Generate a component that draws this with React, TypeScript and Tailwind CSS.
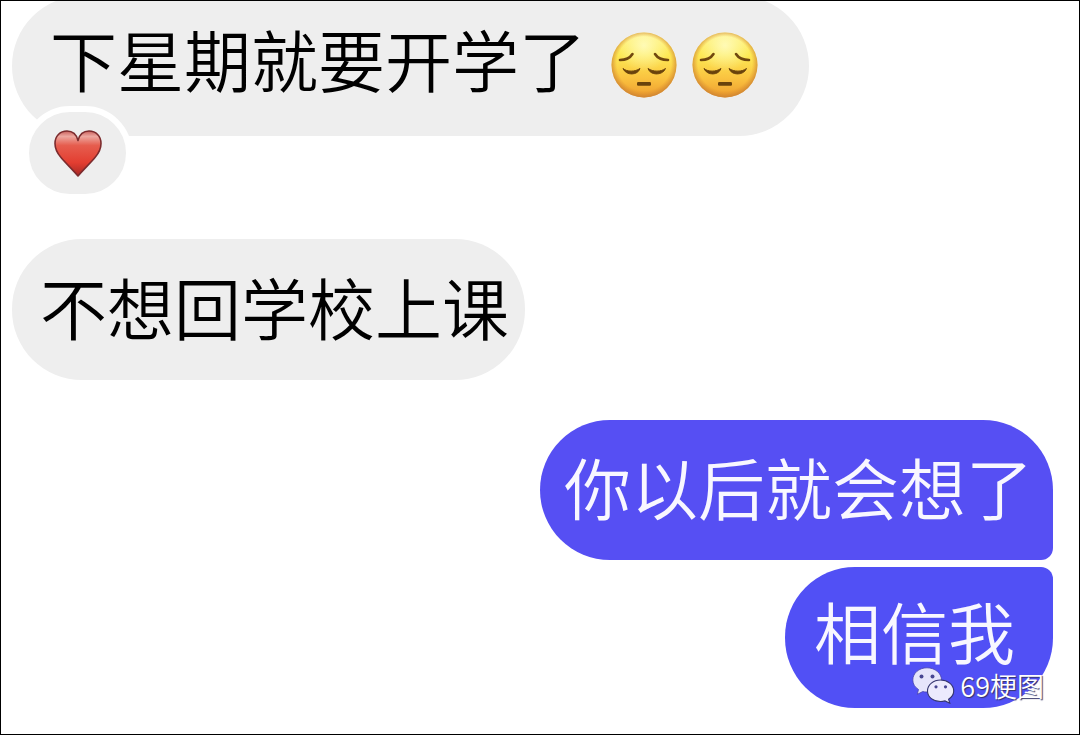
import type { ReactNode } from "react";

const BUBBLE =
  "flex w-fit items-center font-['Noto_Sans_CJK_SC','Noto_Sans',sans-serif] text-[67px] font-[350] leading-[68px] whitespace-nowrap";

function Incoming({ className, children }: { className: string; children: ReactNode }) {
  return <div className={`${BUBBLE} rounded-[70px] bg-[#eeeeee] text-black ${className}`}>{children}</div>;
}

function Outgoing({ className, children }: { className: string; children: ReactNode }) {
  return <div className={`${BUBBLE} text-[#f8f7ff] ${className}`}>{children}</div>;
}

function PensiveFace({ id }: { id: string }) {
  return (
    <svg role="img" aria-label="😔" className="size-[66px] shrink-0" viewBox="0 0 66 66" fill="none">
      <defs>
        <linearGradient id={`${id}-fill`} x1="0" y1="0" x2="0" y2="1">
          <stop offset="0" stopColor="#fff27c" />
          <stop offset="0.35" stopColor="#fde954" />
          <stop offset="0.7" stopColor="#fac340" />
          <stop offset="1" stopColor="#ee9c2e" />
        </linearGradient>
        <radialGradient id={`${id}-rim`} cx="0.5" cy="0.48" r="0.52">
          <stop offset="0.8" stopColor="#d98a2b" stopOpacity="0" />
          <stop offset="1" stopColor="#c98035" stopOpacity="0.85" />
        </radialGradient>
        <radialGradient id={`${id}-shine`} cx="0.5" cy="0.2" r="0.4">
          <stop offset="0" stopColor="#ffffd0" stopOpacity="0.75" />
          <stop offset="1" stopColor="#ffffd0" stopOpacity="0" />
        </radialGradient>
      </defs>
      <circle cx="33" cy="33" r="32.5" fill={`url(#${id}-fill)`} />
      <circle cx="33" cy="33" r="32.5" fill={`url(#${id}-shine)`} />
      <circle cx="33" cy="33" r="32.5" fill={`url(#${id}-rim)`} />
      <g stroke="#70480f" strokeWidth="2.6" strokeLinecap="round">
        <path d="M9 28C14 28 19 26 21.500 22" />
        <path d="M57 28C52 28 46.500 26 44 22" />
      </g>
      <g fill="#69420c">
        <path d="M12 36.500C16 40 24 40 29 36.500C27 43.500 15 44 12 36.500Z" stroke="#69420c" strokeLinejoin="round" />
        <path d="M37 36.500C42 40 50 40 54.500 36.500C51.500 44 39 43.500 37 36.500Z" stroke="#69420c" strokeLinejoin="round" />
        <rect x="26" y="50" width="14" height="3.800" rx="1.200" />
      </g>
    </svg>
  );
}

function Heart() {
  return (
    <svg role="img" aria-label="❤️" className="h-[47px] w-[48px]" viewBox="0 0 48 47">
      <defs>
        <linearGradient id="heart-fill" x1="0" y1="0" x2="0" y2="1">
          <stop offset="0" stopColor="#c9605c" />
          <stop offset="0.12" stopColor="#eda79f" />
          <stop offset="0.32" stopColor="#e65d4e" />
          <stop offset="0.7" stopColor="#e33e31" />
          <stop offset="1" stopColor="#a82824" />
        </linearGradient>
      </defs>
      <path
        d="M24 10.500C22.500 4.500 18.500 1 13 1C6 1 1 6 1 13.500C1 18.500 3.500 23.500 7 27.500C12 33.500 18.500 39.500 24 46C29.500 39.500 36 33.500 41 27.500C44.500 23.500 47 18.500 47 13.500C47 6 42 1 35 1C29.500 1 25.500 4.500 24 10.500Z"
        fill="url(#heart-fill)"
        stroke="#7c2b2d"
        strokeWidth="1.600"
        strokeLinejoin="round"
      />
    </svg>
  );
}

function WeChatLogo() {
  return (
    <svg aria-hidden="true" className="h-[37px] w-[43px] shrink-0" viewBox="0 0 43 37">
      <path
        d="M15 .8C7 .8 .8 6.200 .8 13C.8 17 3 20.300 6.500 22.500L5.300 27.300L10.800 24.500C12 24.900 13.500 25 15 25C23 25 29.500 19.800 29.500 13S23 .8 15 .8Z"
        fill="#e6e4fb"
        stroke="#4743ad"
        strokeWidth=".8"
      />
      <path
        d="M28.500 13C21.500 13 15.500 17.700 15.500 24S21.500 34.500 28.500 34.500C30 34.500 31.500 34.300 33 33.900L37.800 36.200L36.600 32.200C39.800 30.200 41.700 27.300 41.700 24C41.700 17.700 35.500 13 28.500 13Z"
        fill="#eceafd"
        stroke="#35356f"
        strokeWidth="1.100"
      />
      <g fill="#484692">
        <circle cx="9.500" cy="9.500" r="2" />
        <circle cx="20.500" cy="9.500" r="2" />
        <circle cx="24" cy="19.800" r="1.600" />
        <circle cx="33.500" cy="19.800" r="1.600" />
      </g>
    </svg>
  );
}

export default function App() {
  return (
    <main className="flex min-h-screen flex-col overflow-hidden border border-black bg-white pr-[26px] pb-[25px] pl-[11px]">
      <div className="relative -mt-[5px] mb-[103px] w-fit">
        <Incoming className="h-[140px] gap-[25px] pr-[51px] pb-[16px] pl-[38px]">
          <span>下星期就要开学了</span>
          <span className="flex gap-[15px] pt-[14px]">
            <PensiveFace id="face-a" />
            <PensiveFace id="face-b" />
          </span>
        </Incoming>
        <div className="absolute top-[110px] left-[11px] flex h-[94px] w-[109px] items-center justify-center rounded-[47px] border-[6px] border-white bg-[#eeeeee]">
          <Heart />
        </div>
      </div>

      <Incoming className="h-[141px] pr-[16px] pb-[8px] pl-[28px]">不想回学校上课</Incoming>

      <div className="mt-[40px] flex flex-col items-end gap-[7px]">
        <Outgoing className="h-[140px] rounded-[70px] rounded-br-[12px] bg-[#564ff3] pr-[20px] pb-[8px] pl-[24px]">
          你以后就会想了
        </Outgoing>
        <div className="relative">
          <Outgoing className="h-[141px] rounded-[70px] rounded-tr-[12px] bg-[#5150f5] pr-[38px] pb-[16px] pl-[29px]">
            相信我
          </Outgoing>
          <div className="absolute right-[9px] bottom-[4px] flex items-center gap-[5px] font-['Noto_Sans_CJK_SC','Noto_Sans',sans-serif] text-[27px] leading-[28px] font-[350] whitespace-nowrap text-white [text-shadow:1px_1px_1px_#333366]">
            <WeChatLogo />
            <span>69梗图</span>
          </div>
        </div>
      </div>
    </main>
  );
}
